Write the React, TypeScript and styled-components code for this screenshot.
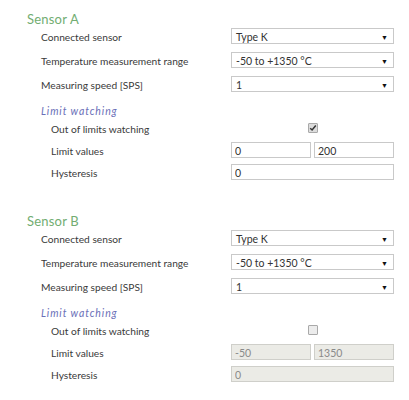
import styled, { createGlobalStyle } from "styled-components";

const GlobalStyle = createGlobalStyle`
  body {
    margin: 0;
    background: #ffffff;
    font-family: Lato, "Open Sans", sans-serif;
    color: #3a3a3a;
  }
`;

const Page = styled.div`
  width: 409px;
  height: 400px;
  padding: 10px 0 0 27px;
  box-sizing: border-box;
  overflow: hidden;
`;

const Section = styled.section`
  margin-bottom: 32px;
`;

const Title = styled.h2`
  margin: 0 0 2px;
  height: 16px;
  line-height: 18px;
  font-size: 13px;
  font-weight: 400;
  letter-spacing: 0.2px;
  color: #72ad72;
`;

const Row = styled.div<{ $nested?: boolean }>`
  display: flex;
  align-items: center;
  height: 16px;
  margin-bottom: ${(p) => (p.$nested ? "6px" : "8px")};
  padding-left: ${(p) => (p.$nested ? "24px" : "14px")};
`;

const Label = styled.div<{ $nested?: boolean }>`
  width: ${(p) => (p.$nested ? "180px" : "190px")};
  padding-top: 2px;
  font-size: 10.2px;
  white-space: nowrap;
`;

const SubHeader = styled.div`
  margin: 10px 0 2px;
  padding-left: 14px;
  height: 16px;
  line-height: 18px;
  font-size: 10.5px;
  font-style: italic;
  letter-spacing: 0.9px;
  color: #6b70b8;
`;

const Control = styled.div`
  width: 163px;
  display: flex;
  gap: 3px;
  justify-content: center;
`;

const SelectBox = styled.div`
  box-sizing: border-box;
  width: 163px;
  height: 16px;
  border: 1px solid #c9c9c9;
  background: #fff;
  display: flex;
  align-items: center;
  justify-content: space-between;
  padding: 1px 5px 0 4px;
  font-size: 10.5px;
  color: #333;
`;

const Arrow = styled.span`
  font-size: 7px;
  color: #111;
`;

const TextInput = styled.input`
  box-sizing: border-box;
  flex: 1;
  min-width: 0;
  height: 16px;
  margin: 0;
  border: 1px solid #c9c9c9;
  background: #fff;
  padding: 1px 3px 0;
  font-family: inherit;
  font-size: 10.5px;
  color: #333;
  outline: none;

  &:disabled {
    background: #ebebe6;
    border-color: #cfcfca;
    color: #8a8a8a;
  }
`;

const CheckBox = styled.span<{ $checked: boolean }>`
  box-sizing: border-box;
  width: 10px;
  height: 10px;
  border: 1px solid #a9a9a9;
  border-radius: 1px;
  background: ${(p) => (p.$checked ? "#dcdcdc" : "#ececec")};
  display: flex;
  align-items: center;
  justify-content: center;
`;

function Select({ value }: { value: string }) {
  return (
    <SelectBox>
      <span>{value}</span>
      <Arrow>▼</Arrow>
    </SelectBox>
  );
}

type SensorProps = {
  name: string;
  watching: boolean;
  low: string;
  high: string;
};

function Sensor({ name, watching, low, high }: SensorProps) {
  return (
    <Section>
      <Title>{name}</Title>
      <Row>
        <Label>Connected sensor</Label>
        <Control>
          <Select value="Type K" />
        </Control>
      </Row>
      <Row>
        <Label>Temperature measurement range</Label>
        <Control>
          <Select value="-50 to +1350 °C" />
        </Control>
      </Row>
      <Row>
        <Label>Measuring speed [SPS]</Label>
        <Control>
          <Select value="1" />
        </Control>
      </Row>
      <SubHeader>Limit watching</SubHeader>
      <Row $nested>
        <Label $nested>Out of limits watching</Label>
        <Control>
          <CheckBox $checked={watching}>
            {watching && (
              <svg width="8" height="8" viewBox="0 0 8 8">
                <path d="M1.2 4.2 L3.1 6 L6.8 1.6" stroke="#333" strokeWidth="1.5" fill="none" />
              </svg>
            )}
          </CheckBox>
        </Control>
      </Row>
      <Row $nested>
        <Label $nested>Limit values</Label>
        <Control>
          <TextInput readOnly disabled={!watching} value={low} />
          <TextInput readOnly disabled={!watching} value={high} />
        </Control>
      </Row>
      <Row $nested>
        <Label $nested>Hysteresis</Label>
        <Control>
          <TextInput readOnly disabled={!watching} value="0" />
        </Control>
      </Row>
    </Section>
  );
}

export default function App() {
  return (
    <>
      <GlobalStyle />
      <Page>
        <Sensor name="Sensor A" watching low="0" high="200" />
        <Sensor name="Sensor B" watching={false} low="-50" high="1350" />
      </Page>
    </>
  );
}
